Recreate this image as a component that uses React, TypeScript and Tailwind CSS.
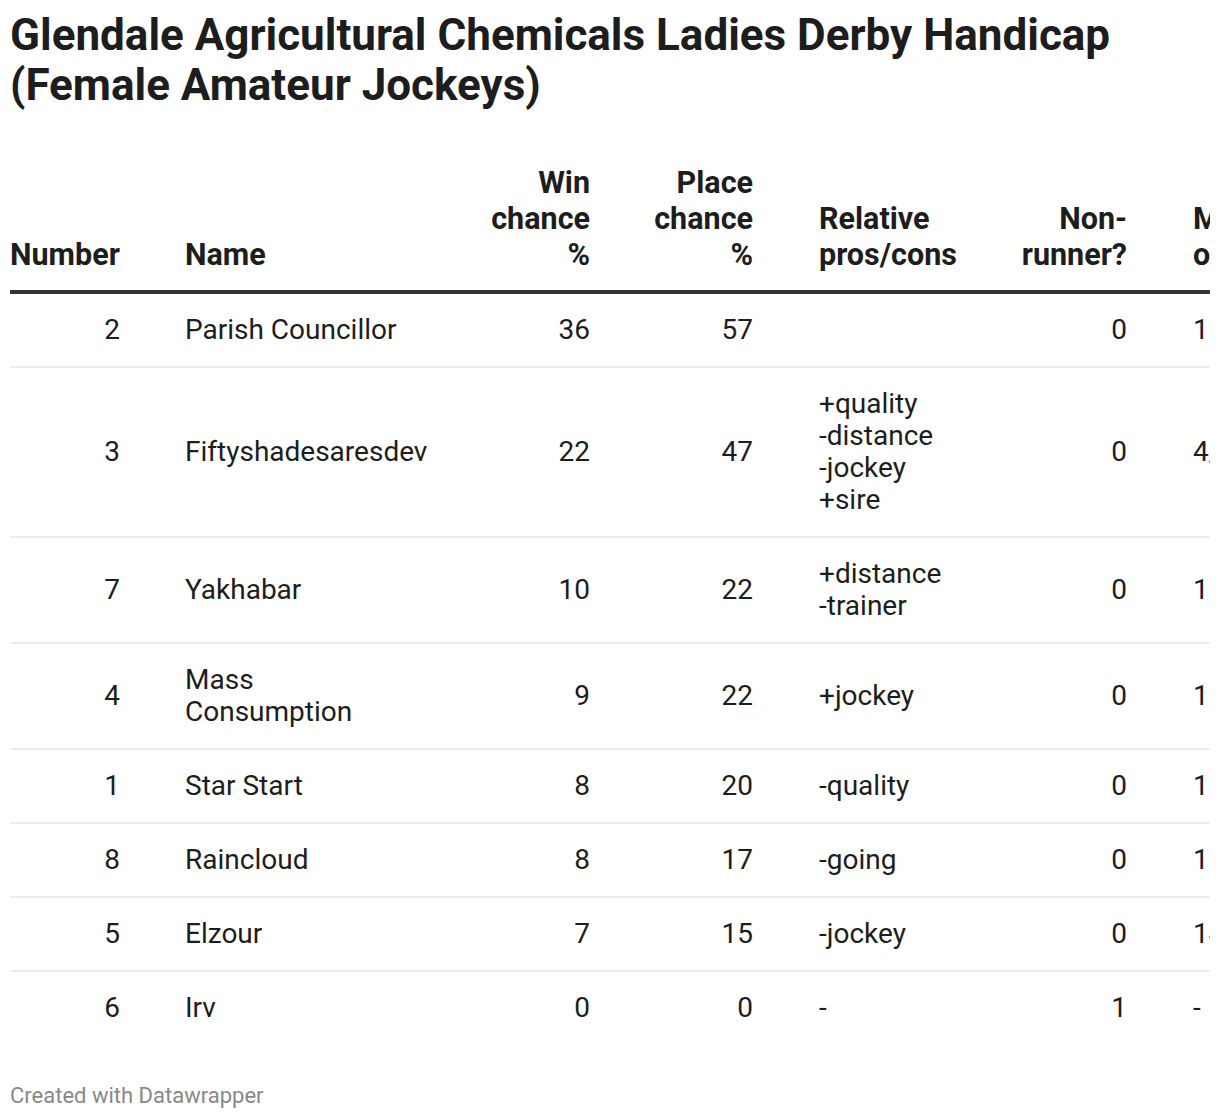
type Runner = {
  number: string;
  name: string;
  win: string;
  place: string;
  notes: string[];
  nonRunner: string;
  odds: string;
};

const runners: Runner[] = [
  { number: "2", name: "Parish Councillor", win: "36", place: "57", notes: [], nonRunner: "0", odds: "11/4" },
  { number: "3", name: "Fiftyshadesaresdev", win: "22", place: "47", notes: ["+quality", "-distance", "-jockey", "+sire"], nonRunner: "0", odds: "4/1" },
  { number: "7", name: "Yakhabar", win: "10", place: "22", notes: ["+distance", "-trainer"], nonRunner: "0", odds: "10/1" },
  { number: "4", name: "Mass Consumption", win: "9", place: "22", notes: ["+jockey"], nonRunner: "0", odds: "10/1" },
  { number: "1", name: "Star Start", win: "8", place: "20", notes: ["-quality"], nonRunner: "0", odds: "11/1" },
  { number: "8", name: "Raincloud", win: "8", place: "17", notes: ["-going"], nonRunner: "0", odds: "12/1" },
  { number: "5", name: "Elzour", win: "7", place: "15", notes: ["-jockey"], nonRunner: "0", odds: "14/1" },
  { number: "6", name: "Irv", win: "0", place: "0", notes: ["-"], nonRunner: "1", odds: "-" },
];

const cols = "grid grid-cols-[142px_306px_165px_163px_204px_170px_200px]";

function HeadLines({ lines }: { lines: string[] }) {
  return (
    <>
      {lines.map((l) => (
        <span key={l} className="block whitespace-nowrap">
          {l}
        </span>
      ))}
    </>
  );
}

export default function App() {
  return (
    <div className="bg-white font-['Roboto',sans-serif] text-[#1d1d1d] px-[10px] pt-[10px] pb-[20px]">
      <h1 className="text-[44px] leading-[50px] font-bold">
        Glendale Agricultural Chemicals Ladies Derby Handicap (Female Amateur Jockeys)
      </h1>

      <div className="w-[1200px] overflow-hidden mt-[55px]">
        <div className="w-[1350px]">
          <div className={`${cols} items-end border-b-4 border-[#333] pb-[17px] text-[30.5px] leading-[36px] font-bold`}>
            <div className="pr-[32px] text-left whitespace-nowrap">Number</div>
            <div className="pl-[33px]">Name</div>
            <div className="pr-[33px] text-right">
              <HeadLines lines={["Win", "chance", "%"]} />
            </div>
            <div className="pr-[33px] text-right">
              <HeadLines lines={["Place", "chance", "%"]} />
            </div>
            <div className="pl-[33px]">
              <HeadLines lines={["Relative", "pros/cons"]} />
            </div>
            <div className="pr-[33px] text-right">
              <HeadLines lines={["Non-", "runner?"]} />
            </div>
            <div className="pl-[33px]">
              <HeadLines lines={["Market", "odds"]} />
            </div>
          </div>

          {runners.map((r, i) => (
            <div
              key={r.name}
              className={`${cols} items-center py-[20px] text-[28px] leading-[32px] ${
                i < runners.length - 1 ? "border-b-2 border-[#ececec]" : ""
              }`}
            >
              <div className="pr-[32px] text-right">{r.number}</div>
              <div className="pl-[33px] pr-[60px]">{r.name}</div>
              <div className="pr-[33px] text-right">{r.win}</div>
              <div className="pr-[33px] text-right">{r.place}</div>
              <div className="pl-[33px]">
                {r.notes.map((n) => (
                  <span key={n} className="block">
                    {n}
                  </span>
                ))}
              </div>
              <div className="pr-[33px] text-right">{r.nonRunner}</div>
              <div className="pl-[33px]">{r.odds}</div>
            </div>
          ))}
        </div>
      </div>

      <p className="mt-[39px] text-[22px] leading-[26px] text-[#888]">Created with Datawrapper</p>
    </div>
  );
}
